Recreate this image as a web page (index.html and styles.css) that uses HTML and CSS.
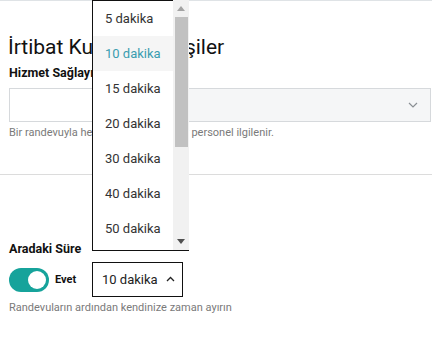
FILE: index.html
```html
<!DOCTYPE html>
<html lang="tr">
<head>
<meta charset="utf-8">
<link rel="stylesheet" href="styles.css">
</head>
<body>
<div class="page">
  <div class="topline"></div>
  <h1 class="title">İrtibat Kurulacak Kişiler</h1>
  <div class="label">Hizmet Sağlayıcısı</div>
  <div class="input">
    <span class="blank"></span>
    <svg class="chev" width="10" height="6" viewBox="0 0 10 6"><path d="M1 1l4 4 4-4" fill="none" stroke="#8a8f94" stroke-width="1.2"/></svg>
  </div>
  <div class="help">Bir randevuyla hesaptaki herhangi bir personel ilgilenir.</div>
  <div class="divider"></div>
  <div class="label label2">Aradaki Süre</div>
  <div class="row">
    <div class="toggle"><span class="knob"></span></div>
    <span class="evet">Evet</span>
    <div class="select">10 dakika
      <svg class="caret" width="9" height="6" viewBox="0 0 9 6"><path d="M1 5l3.5-3.5L8 5" fill="none" stroke="#222" stroke-width="1.3"/></svg>
    </div>
  </div>
  <div class="help">Randevuların ardından kendinize zaman ayırın</div>
</div>

<div class="dropdown">
  <ul class="list">
    <li>5 dakika</li>
    <li class="active">10 dakika</li>
    <li>15 dakika</li>
    <li>20 dakika</li>
    <li>30 dakika</li>
    <li>40 dakika</li>
    <li>50 dakika</li>
  </ul>
  <div class="scrollbar">
    <svg class="up" width="8" height="5" viewBox="0 0 8 5"><path d="M0 5L4 0l4 5z" fill="#a3a3a3"/></svg>
    <div class="thumb"></div>
    <svg class="down" width="8" height="5" viewBox="0 0 8 5"><path d="M0 0l4 5 4-5z" fill="#505050"/></svg>
  </div>
</div>
</body>
</html>
```
FILE: styles.css
```css
* { box-sizing: border-box; }
html, body { margin: 0; padding: 0; background: #fff; }
body { font-family: Roboto, "Noto Sans", sans-serif; color: #111; width: 438px; height: 341px; overflow: hidden; position: relative; }
.page { width: 432px; display: flex; flex-direction: column; }
.topline { height: 1px; background: #dfe3e6; }
.title { margin: 34px 0 0 8px; font-size: 21px; line-height: 24px; font-weight: 400; color: #111; }
.label { margin: 6px 0 0 9px; font-size: 12.5px; line-height: 16px; font-weight: 700; color: #111; }
.input { margin: 7px 1px 0 9px; height: 34px; border: 1px solid #d6d9dc; background: #f5f6f7; display: flex; align-items: center; justify-content: space-between; padding-right: 12px; }
.blank { width: 82px; height: 32px; background: #fff; }
.help { margin: 4px 0 0 9px; font-size: 11px; line-height: 14px; color: #7a7a7a; }
.divider { margin-top: 34px; height: 1px; background: #dcdcdc; }
.label2 { margin-top: 66px; }
.row { margin: 5px 0 0 9px; display: flex; align-items: center; height: 35px; }
.toggle { width: 40px; height: 24px; border-radius: 12px; background: #16a39b; position: relative; }
.knob { position: absolute; right: 3px; top: 3px; width: 18px; height: 18px; border-radius: 50%; background: #fff; }
.evet { margin-left: 6px; font-size: 11px; font-weight: 700; width: 37px; }
.select { width: 91px; height: 35px; border: 1px solid #111; display: flex; align-items: center; padding-left: 9px; font-size: 13px; color: #222; gap: 8px; }
.caret { margin-top: -1px; }
.dropdown { position: absolute; left: 92px; top: 0; width: 97px; height: 251px; border-left: 1px solid #111; border-top: 1px solid #111; border-bottom: 1px solid #111; background: #fff; }
.list { list-style: none; margin: 0; padding: 0 16px 0 0; }
.list li { height: 35px; display: flex; align-items: center; padding-left: 12px; font-size: 13px; color: #333; }
.list li.active { background: #f5f5f5; color: #3a9db0; }
.scrollbar { position: absolute; right: 0; top: -1px; bottom: 0; width: 16px; background: #f1f1f1; display: flex; flex-direction: column; align-items: center; }
.up { margin-top: 6px; }
.thumb { margin-top: 6px; width: 13px; height: 130px; background: #c1c1c1; }
.down { margin-top: auto; margin-bottom: 6px; }
```
